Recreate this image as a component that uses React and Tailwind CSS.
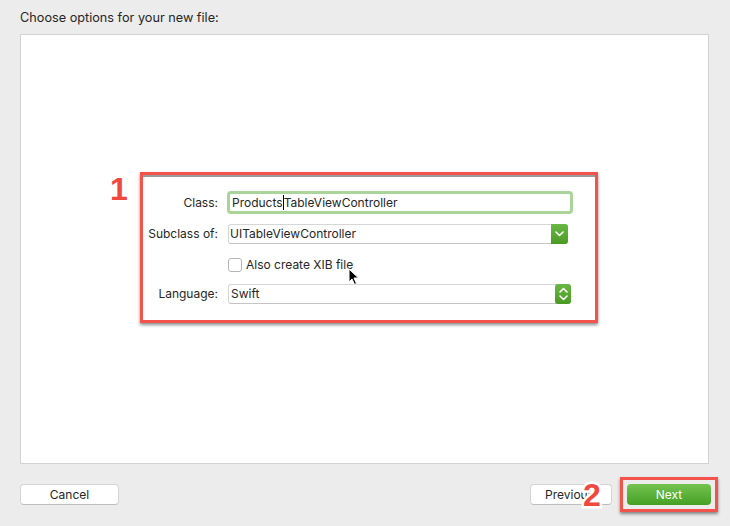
import React from 'react'

const font = { fontFamily: 'Inter, "Liberation Sans", sans-serif' }

const Badge = ({ children, className }) => (
  <span
    className={`absolute font-bold text-[32px] leading-none text-[#f0473e] [-webkit-text-stroke:5px_white] [paint-order:stroke_fill] ${className}`}
    style={{ fontFamily: '"Liberation Sans", Arial, sans-serif' }}
  >
    {children}
  </span>
)

const ChevronDown = () => (
  <svg width="9" height="6" viewBox="0 0 9 6" fill="none">
    <path d="M1 1l3.5 3.5L8 1" stroke="white" strokeWidth="1.6" strokeLinecap="round" strokeLinejoin="round" />
  </svg>
)

const UpDown = () => (
  <svg width="9" height="14" viewBox="0 0 9 14" fill="none">
    <path d="M1 5l3.5-3.5L8 5M1 9l3.5 3.5L8 9" stroke="white" strokeWidth="1.6" strokeLinecap="round" strokeLinejoin="round" />
  </svg>
)

const Pointer = () => (
  <svg width="12" height="18" viewBox="0 0 12 18" className="absolute left-[348px] top-[268px]">
    <path d="M1 1v13l3-3 2.5 5.5 2-1L6 10h4.5z" fill="black" stroke="white" strokeWidth="1" strokeLinejoin="round" />
  </svg>
)

const Label = ({ children }) => (
  <div className="w-[75px] flex justify-end whitespace-nowrap">
    <span className="shrink-0">{children}</span>
  </div>
)

export default function App() {
  return (
    <div className="relative w-[730px] h-[526px] bg-[#ececec] flex flex-col px-5 pt-[10px] text-[#262626]" style={font}>
      <div className="text-[12.7px] leading-4 h-6">Choose options for your new file:</div>

      {/* main panel */}
      <div className="w-[689px] h-[430px] bg-white border border-[#d2d2d2] pl-[119px] pt-[137px]">
        <div className="relative w-[458px] h-[151px] border-[3px] border-[#f2544b] shadow-[0_2px_3px_rgba(0,0,0,0.45)]">
          <Badge className="-left-[33px] -top-[2px]">1</Badge>
          <div className="border-t-2 border-[#9a9a9a] h-full flex flex-col pt-[14px] text-[12px]">
            <div className="flex items-center h-[23px]">
              <Label>Class:</Label>
              <div className="ml-[9px] w-[346px] h-[23px] rounded-[4px] border-[3px] border-[#a9d59b] flex items-center pl-[2px]">
                <span>Products</span>
                <span className="w-px h-[15px] bg-black" />
                <span>TableViewController</span>
              </div>
            </div>
            <div className="flex items-center h-5 mt-[10px]">
              <Label>Subclass of:</Label>
              <div className="ml-[10px] w-[340px] h-5 flex rounded-[3px] border border-[#d6d6d6] border-b-[#c4c4c4] bg-white">
                <div className="flex-1 pl-[1px] leading-[18px]">UITableViewController</div>
                <div className="w-[17px] -my-px -mr-px rounded-r-[3px] bg-gradient-to-b from-[#6ab843] to-[#4a9a22] flex items-center justify-center">
                  <ChevronDown />
                </div>
              </div>
            </div>
            <div className="flex items-center h-[15px] mt-[13px] pl-[85px]">
              <div className="w-[14px] h-[14px] rounded-[3px] border border-[#b5b5b5] bg-white" />
              <span className="ml-[4px]">Also create XIB file</span>
            </div>
            <div className="flex items-center h-5 mt-[12px]">
              <Label>Language:</Label>
              <div className="ml-[10px] w-[343px] h-5 flex rounded-[3px] border border-[#d6d6d6] border-b-[#c4c4c4] bg-white">
                <div className="flex-1 pl-[2px] leading-[18px]">Swift</div>
                <div className="w-[16px] -my-px -mr-px rounded-[3px] bg-gradient-to-b from-[#6ab843] to-[#4a9a22] flex items-center justify-center">
                  <UpDown />
                </div>
              </div>
            </div>
          </div>
        </div>
      </div>

      {/* bottom buttons */}
      <div className="flex items-center mt-[13px] text-[12px]">
        <button className="w-[99px] h-[21px] rounded-[4px] bg-white border border-[#d4d4d4] border-b-[#bdbdbd] leading-[19px]">Cancel</button>
        <div className="flex-1" />
        <div className="relative">
          <button className="w-[82px] h-[21px] rounded-[4px] bg-white border border-[#d4d4d4] border-b-[#bdbdbd] leading-[19px] text-left pl-[14px]">Previous</button>
          <Badge className="left-[53px] -top-[5px]">2</Badge>
        </div>
        <div className="ml-[8px] -mr-[8px] w-[98px] h-[35px] border-[3px] border-[#f2544b] shadow-[0_2px_3px_rgba(0,0,0,0.45)] flex items-center justify-center">
          <button className="w-[84px] h-[21px] rounded-[4px] bg-gradient-to-b from-[#74c350] to-[#45a021] text-white leading-[21px]">Next</button>
        </div>
      </div>

      <Pointer />
    </div>
  )
}
